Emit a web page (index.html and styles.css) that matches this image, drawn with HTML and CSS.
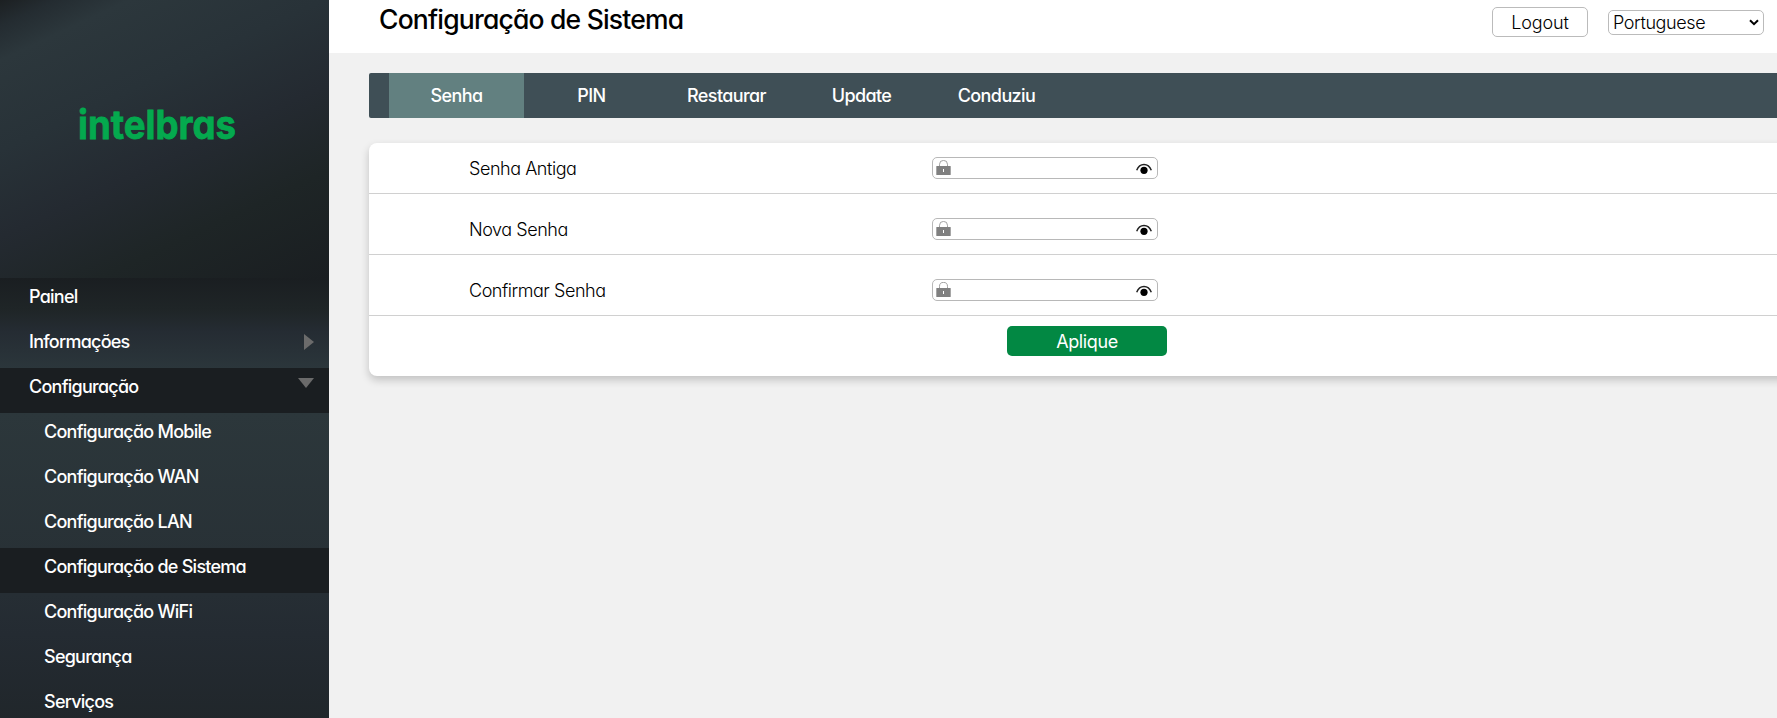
FILE: index.html
```
<!DOCTYPE html>
<html lang="pt">
<head>
<meta charset="utf-8">
<title>Configuração de Sistema</title>
<link rel="stylesheet" href="styles.css">
</head>
<body>
<svg class="defs" aria-hidden="true">
  <symbol id="lock" viewBox="0 0 15 15"><path d="M3.500 7V4.400a4 4 0 0 1 8 0V7" fill="none" stroke="#8a8a8a" stroke-width=".8"/><rect x=".3" y="6" width="14.400" height="9" rx=".5" fill="#808080"/><rect x="7" y="9" width="1" height="3" fill="#fff"/></symbol>
  <symbol id="eye" viewBox="0 0 16 12"><path d="M.7 7.200C2.200 3.400 4.700 1.500 8 1.500s5.800 1.900 7.300 5.700" fill="none" stroke="#222" stroke-width="1.500"/><circle cx="8" cy="7.300" r="3.600"/></symbol>
</svg>
<div class="app">
  <aside class="sidebar">
    <div class="brand">
      <svg width="164" height="56" viewBox="0 0 164 56"><text class="wordmark" x="0" y="43" textLength="158" lengthAdjust="spacingAndGlyphs">intelbras</text></svg>
    </div>
    <nav class="menu">
      <a class="item">Painel</a>
      <a class="item">Informações <svg class="right" width="10" height="16"><path d="M0 0L10 8L0 16Z" fill="#6b6b6b"/></svg></a>
    </nav>
    <a class="item open">Configuração <svg class="down" width="16" height="10"><path d="M0 0H16L8 10Z" fill="#6b6b6b"/></svg></a>
    <nav class="submenu">
      <a class="item">Configuração Mobile</a>
      <a class="item">Configuração WAN</a>
      <a class="item">Configuração LAN</a>
      <a class="item active">Configuração de Sistema</a>
      <a class="item">Configuração WiFi</a>
      <a class="item">Segurança</a>
      <a class="item">Serviços</a>
    </nav>
  </aside>
  <main class="main">
    <header class="header">
      <h1 class="title">Configuração de Sistema</h1>
      <button class="logout">Logout</button>
      <div class="select"><span>Portuguese</span><svg width="10" height="7" viewBox="0 0 10 7"><path d="M1 1.200L5 5.200L9 1.200" fill="none" stroke="#000" stroke-width="2"/></svg></div>
    </header>
    <div class="tabs">
      <a class="tab current">Senha</a><a class="tab">PIN</a><a class="tab">Restaurar</a><a class="tab">Update</a><a class="tab">Conduziu</a>
    </div>
    <section class="card">
      <div class="row first"><label class="label">Senha Antiga</label><div class="field"><svg class="lock"><use href="#lock"/></svg><svg class="eye"><use href="#eye"/></svg></div></div>
      <div class="row"><label class="label">Nova Senha</label><div class="field"><svg class="lock"><use href="#lock"/></svg><svg class="eye"><use href="#eye"/></svg></div></div>
      <div class="row"><label class="label">Confirmar Senha</label><div class="field"><svg class="lock"><use href="#lock"/></svg><svg class="eye"><use href="#eye"/></svg></div></div>
      <button class="apply">Aplique</button>
    </section>
  </main>
</div>
</body>
</html>
```
FILE: styles.css
```
* { box-sizing: border-box; }
body {
  margin: 0;
  overflow: hidden;
  background: #f1f1f1;
  color: #000;
  font: 400 18px/24px Inter, Roboto, sans-serif;
  font-feature-settings: "cv11" 1;
  letter-spacing: -.6px;
}
.defs { display: none; }
.app { display: flex; height: 718px; overflow: hidden; }
.sidebar { width: 329px; flex: none; }
.brand {
  height: 278px;
  padding: 96px 0 0 78px;
  background: linear-gradient(155deg, #1c2022 0, #242c31 6%, #2c373c 14%, #283238 35%, #242a31 55%, #1e2526 75%, #1a1e21 100%);
}
.brand svg { display: block; }
.wordmark { font: 700 40px Inter, sans-serif; font-feature-settings: "cv11" 1; letter-spacing: 0; fill: #04a94e; stroke: #04a94e; stroke-width: .8px; }
.menu { background: linear-gradient(#1a1e21, #1f2527 35%, #252c33 60%, #2b363b); }
.item {
  display: flex;
  justify-content: space-between;
  height: 45px;
  padding: 7px 15px 0 29px;
  color: #fff;
  font-weight: 500;
  letter-spacing: -.75px;
}
.right { margin-top: 4px; }
.down { margin-top: 3px; }
.open { background: #1a1e21; }
.submenu { height: 315px; background: linear-gradient(#2c373b, #283136 45%, #242b32 70%, #20262a); }
.submenu .item { padding-left: 44px; }
.submenu .active { background: #1a1e21; }
.main { flex: 1; min-width: 0; }
.header { display: flex; align-items: flex-start; height: 53px; background: #fff; padding: 0 13px 0 50px; }
.title { margin: 2px auto 0 0; font-size: 26.500px; line-height: 34px; font-weight: 500; letter-spacing: -.8px; }
.logout {
  width: 96px;
  height: 30px;
  margin: 7px 20px 0 0;
  padding: 1px 0 0;
  border: 1px solid #bbb;
  border-radius: 5px;
  background: #fff;
  font: inherit;
  font-weight: 300;
  font-feature-settings: inherit;
  letter-spacing: -.1px;
}
.select {
  display: flex;
  align-items: center;
  justify-content: space-between;
  width: 156px;
  height: 25px;
  margin-top: 10px;
  padding: 1px 4px;
  border: 1px solid #bbb;
  border-radius: 5px;
  font-weight: 300;
  letter-spacing: -.4px;
}
.tabs { display: flex; height: 45px; margin: 20px 0 25px 40px; padding-left: 20px; border-radius: 2px 0 0 2px; background: #3f4f56; }
.tab { width: 135px; line-height: 46px; text-align: center; color: #fff; font-weight: 500; }
.current { background: #628080; }
.card { height: 233px; margin: 0 -20px 0 40px; border-radius: 8px; background: #fff; box-shadow: 0 4px 8px rgba(0, 0, 0, .2); }
.row { display: flex; height: 61px; padding: 24px 0 0 100px; border-bottom: 1px solid #d0d0d0; }
.row.first { height: 51px; padding-top: 14px; }
.label { width: 463px; line-height: 23px; font-weight: 300; letter-spacing: -.45px; }
.field { display: flex; justify-content: space-between; width: 226px; height: 22px; padding: 2px 5px 0 3px; border: 1px solid #b8b8b8; border-radius: 5px; }
.lock { width: 15px; height: 15px; }
.eye { width: 16px; height: 12px; margin-top: 3px; }
.apply {
  display: block;
  width: 160px;
  height: 30px;
  margin: 10px 0 0 638px;
  padding: 2px 0 0;
  border: 0;
  border-radius: 5px;
  background: #028843;
  color: #fff;
  font: inherit;
  font-feature-settings: inherit;
  letter-spacing: -.4px;
}
```
